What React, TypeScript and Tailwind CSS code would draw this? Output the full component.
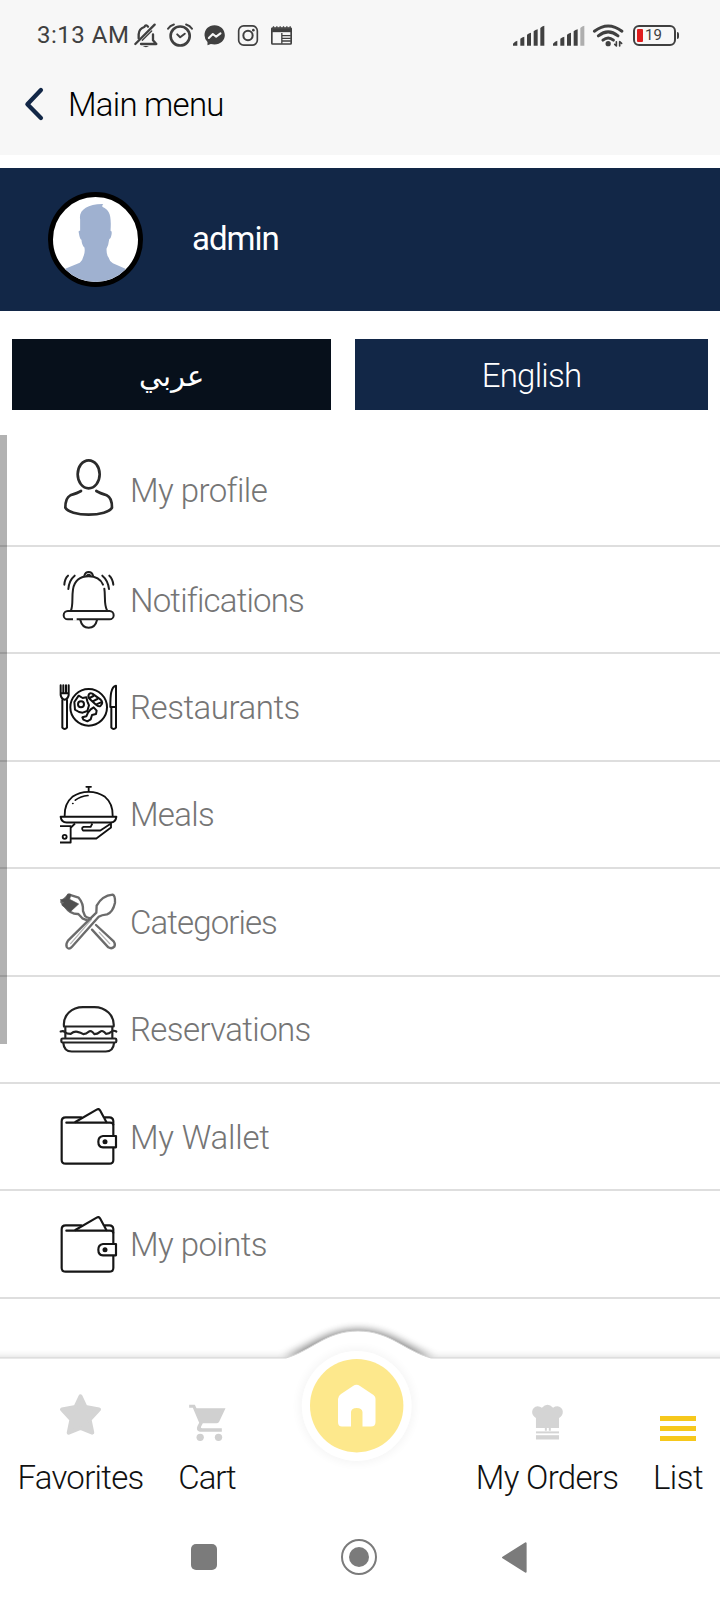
import type { ReactNode } from "react";

type IconProps = { box: string; className: string; children: ReactNode };

function Icon({ box, className, children }: IconProps) {
  return (
    <svg viewBox={box} className={`block shrink-0 overflow-visible ${className}`} fill="none" stroke="currentColor" strokeLinecap="round" strokeLinejoin="round">
      {children}
    </svg>
  );
}

function SignalIcon({ weak = false }: { weak?: boolean }) {
  return (
    <Icon box="455 73 96 63" className="h-[21px] w-8">
      <g fill="currentColor" stroke="none">
        <path d="M455 135v-6q6-8 13-9v15z" />
        <path d="M477 135v-21q5-5 12-6v27z" />
        <path d="M497 135v-33q5-5 12-6v39z" />
        <path d="M517 135v-43q5-5 12-6v49z" />
        <path d="M537 135v-53q5-6 12-7v60z" opacity={weak ? 0.4 : 1} />
      </g>
    </Icon>
  );
}

function StatusBar() {
  return (
    <div className="flex h-[70px] items-center pl-[37px] pr-[41px] text-[#404040]">
      <span className="w-[97px] whitespace-nowrap text-2xl font-normal tracking-[0.5px]">3:13 AM</span>
      <Icon box="403 67 72 75" className="h-[25px] w-6">
        <g strokeWidth="7">
          <path d="M407 130L465 72" />
          <path d="M417 113V101Q418 84 434 79Q439 70 445 78" />
          <path d="M424 130H470L460 119V101" />
          <path d="M428 119L456 91" strokeWidth="4" />
        </g>
        <path d="M429 136h19q-9 7-19 0z" fill="currentColor" stroke="none" />
      </Icon>
      <Icon box="501 67 79 72" className="ml-[9px] h-6 w-[26px]">
        <circle cx="541" cy="106" r="29" strokeWidth="8" />
        <path d="M504 84Q510 74 522 71M559 71Q571 74 577 84" strokeWidth="6" />
        <path d="M532 101l9 9 14-11" strokeWidth="6" />
      </Icon>
      <Icon box="613 73 62 63" className="ml-[11px] h-[21px] w-[21px]">
        <path d="M644 74C626 74 614 87 614 104Q614 116 623 124V134L633 130C657 136 675 122 675 104C675 87 662 74 644 74z" fill="currentColor" stroke="none" />
        <path d="M627 112L639 100L649 108L662 98" stroke="#f7f7f7" strokeWidth="6" />
      </Icon>
      <Icon box="714 73 60 62" className="ml-[13px] h-[21px] w-5">
        <rect x="716" y="75" width="56" height="58" rx="15" strokeWidth="5" />
        <circle cx="744" cy="104" r="14" strokeWidth="6" />
        <circle cx="760" cy="88" r="4" fill="currentColor" stroke="none" />
      </Icon>
      <Icon box="813 76 62 57" className="ml-[13px] h-[19px] w-[21px]">
        <rect x="815" y="82" width="58" height="48" rx="2" strokeWidth="5" />
        <path d="M816 83H873V94H816z" fill="currentColor" />
        <path d="M818 79H873" strokeWidth="4" strokeDasharray="4 6" strokeLinecap="butt" />
        <path d="M845 97V129M847 105H872M847 113H872M847 121H872" strokeWidth="4" strokeLinecap="butt" />
      </Icon>
      <div className="ml-auto flex items-center">
        <SignalIcon />
        <div className="w-2" />
        <SignalIcon weak />
        <Icon box="696 70 91 70" className="ml-[8px] h-[23px] w-[30px]">
          <path d="M700 92Q742 60 784 92M712 106Q742 82 772 106M726 119Q742 106 758 119" strokeWidth="9" />
          <circle cx="742" cy="130" r="8" fill="currentColor" stroke="none" />
          <path d="M767 124V137M777 137V124M762 132l5 5M777 124l6 5" strokeWidth="5" />
        </Icon>
        <div className="ml-[10px] flex items-center">
          <div className="flex h-[21px] w-[43px] items-center rounded-[6px] border-2 border-[#404040] pl-[2.5px]">
            <div className="h-[13px] w-[6px] rounded-[1px] bg-[#e01d1d]" />
            <span className="ml-[2px] text-[15px] leading-none">19</span>
          </div>
          <div className="ml-px h-[7px] w-[2.5px] rounded-r-sm bg-[#404040]" />
        </div>
      </div>
    </div>
  );
}

function ProfileIcon() {
  return (
    <Icon box="180 95 171 171" className="size-[57px] text-[#2b2b2b]">
      <g strokeWidth="8">
        <ellipse cx="266" cy="132" rx="33" ry="42" />
        <path d="M243 182Q233 188 211 195C199 201 196 213 196 232C202 244 232 253 266 253C300 253 330 244 336 232C336 213 333 201 320 195Q299 188 289 182" />
      </g>
    </Icon>
  );
}

function BellIcon() {
  return (
    <Icon box="180 423 171 171" className="size-[57px] text-[#1f1f1f]">
      <g strokeWidth="6">
        <rect x="191" y="543" width="150" height="25" rx="12.5" />
        <path d="M213 541C220 524 215 505 219 478C224 450 242 439 266 439C287 439 302 448 309 464M313 476C317 500 311 522 321 541" />
        <path d="M253 437Q256 426 266 426Q276 426 279 437M261 437Q266 431 271 437" />
        <path d="M241 570Q246 593 266 593Q286 593 291 570" />
        <path d="M193 464Q194 446 204 437M205 477Q207 451 224 437M340 464Q338 446 328 437M327 477Q324 451 307 437" />
      </g>
      <path d="M219 568H230" stroke="#fff" strokeWidth="8" strokeLinecap="butt" />
    </Icon>
  );
}

function PlateIcon() {
  return (
    <Icon box="180 86 171 171" className="size-[57px] text-[#111]">
      <g strokeWidth="6">
        <path d="M182 105V134Q184 146 194 148Q204 146 206 134V105M190 105V128M198 105V128M182 129H206" />
        <path d="M187 149V232Q194 240 201 232V149" />
        <path d="M334 170V232Q341 240 348 232V106C332 109 331 137 331 170H348" />
        <circle cx="266" cy="171" r="55" />
        <path d="M236 136L248 143L259 141L262 153L267 165L262 182L248 187L237 185L225 178L223 155z" />
        <circle cx="243" cy="162" r="9" />
        <path d="M266 134Q268 127 277 130L302 148Q311 157 302 166Q296 171 288 163L270 147Q263 141 266 134zM269 143L280 137M278 153L292 146M289 162L303 156" />
        <path d="M272 177L281 171L290 181L288 191L276 194L272 207L262 213L250 208L247 201L259 198L264 187z" />
      </g>
    </Icon>
  );
}

function ClocheIcon() {
  return (
    <Icon box="180 407.5 171 171" className="size-[57px] text-[#111]">
      <g strokeWidth="5.5">
        <path d="M194 497Q193 460 217 440Q238 425 266 425Q294 425 315 440Q339 460 338 497" />
        <path d="M182 500H349Q347 516 332 517H200Q184 516 182 500z" strokeWidth="6" />
        <path d="M259 410H273M266 411V423" />
        <path d="M226 450Q242 438 264 436M218 460h1" strokeWidth="5" />
        <path d="M180 528H212V577H180M212 533L225 520M213 565H289L333 532V520L301 541H249Q243 533 251 530H272L277 520" strokeLinecap="butt" />
        <circle cx="194" cy="560" r="6" />
      </g>
    </Icon>
  );
}

function CutleryIcon() {
  return (
    <Icon box="180 70 171 171" className="size-[57px] text-[#6b6b6b]">
      <g strokeWidth="7">
        <path d="M184 97L207 75L236 84Q251 101 249 124L255 139Q260 145 272 146M184 97L197 113Q211 134 235 133L247 146L262 152" />
        <path d="M276 180L325 233Q335 239 343 231Q347 223 341 215L288 166" />
        <path d="M290 108Q306 78 338 75Q346 78 345 99Q339 127 321 134Q305 136 296 141L216 231Q206 242 200 232Q197 223 204 213L289 129z" />
        <path d="M274 150L212 222M298 188L329 222" strokeWidth="4" opacity=".5" />
      </g>
      <path d="M181 91L191 99L185 106L211 126L236 103L209 89L213 74L203 73L197 87L182 90z" fill="#505050" stroke="#555" strokeWidth="2" />
    </Icon>
  );
}

function BurgerIcon() {
  return (
    <Icon box="180 392.5 171 171" className="size-[57px] text-[#222]">
      <g strokeWidth="6.5">
        <path d="M192 469C188 435 216 411 249 411H283C316 411 344 435 341 469z" />
        <path d="M196 472V502M337 472V502" />
        <path d="M182 484Q190 481 195 486T212 491Q222 483 232 485T250 492Q259 492 266 485T283 492Q292 492 300 485T318 491Q328 491 334 485T349 484" />
        <rect x="184" y="505" width="165" height="12" rx="4" />
        <path d="M190 519Q192 544 215 544H317Q340 544 342 519" />
      </g>
    </Icon>
  );
}

function WalletIcon() {
  return (
    <Icon box="180 84 171 171" className="size-[57px] text-[#161616]">
      <g strokeWidth="6.5">
        <path d="M340 165V139Q341 128 330 128H199M244 112H197Q185 112 185 124V240Q185 251 197 251H328Q340 251 340 240V204" />
        <path d="M226 126L290 89Q296 85 300 91L319 126M311 112H328Q339 112 340 123V134" />
        <path d="M348 168H309Q295 170 295 185Q295 201 309 202H348z" />
      </g>
      <circle cx="315" cy="185" r="7.5" fill="currentColor" stroke="none" />
    </Icon>
  );
}

const rows = [
  { label: "My profile", icon: <ProfileIcon />, size: "h-[112px]", track: "tracking-[-0.55px]" },
  { label: "Notifications", icon: <BellIcon />, size: "h-[107.4px]", track: "tracking-[-0.8px]" },
  { label: "Restaurants", icon: <PlateIcon />, size: "h-[107.4px]", track: "tracking-[-0.45px]" },
  { label: "Meals", icon: <ClocheIcon />, size: "h-[107.4px]", track: "tracking-[-0.7px]" },
  { label: "Categories", icon: <CutleryIcon />, size: "h-[107.4px]", track: "tracking-[-0.9px]" },
  { label: "Reservations", icon: <BurgerIcon />, size: "h-[107.4px]", track: "tracking-[-0.6px]" },
  { label: "My Wallet", icon: <WalletIcon />, size: "h-[107.4px]", track: "tracking-[-0.2px]" },
  { label: "My points", icon: <WalletIcon />, size: "h-[107.4px]", track: "tracking-[-0.55px]" },
];

function BottomNav() {
  return (
    <nav className="relative h-[147px] bg-white text-[33px] font-light leading-[40px] text-[#111]">
      <svg viewBox="0 0 720 240" className="absolute left-0 top-[-48px] block h-60 w-[720px]">
        <defs>
          <filter id="edge" x="-5%" y="-30%" width="110%" height="160%">
            <feGaussianBlur stdDeviation="4" />
          </filter>
          <filter id="ring" x="-20%" y="-20%" width="140%" height="140%">
            <feGaussianBlur stdDeviation="4" />
          </filter>
          <clipPath id="above">
            <rect width="720" height="62" />
          </clipPath>
        </defs>
        <g clipPath="url(#above)">
          <path d="M-20 48H285C306 42 326 20 358 20C390 20 408 40 432 48H740V70H-20z" fill="#000" opacity=".2" filter="url(#edge)" />
          <path d="M283 47C308 38 326 20 358 20C390 20 408 38 434 47z" fill="#000" opacity=".38" filter="url(#edge)" />
        </g>
        <path d="M-5 48H286C312 40.500 326 21 358 21C390 21 404 40.500 431 48H725V245H-5z" fill="#fff" stroke="#d4d4d4" strokeWidth="1" />
        <circle cx="356.700" cy="96" r="58" fill="#000" opacity=".035" filter="url(#ring)" />
        <circle cx="356.700" cy="96" r="55" fill="#fff" />
        <circle cx="356.700" cy="95.700" r="46.700" fill="#fde88c" />
        <path d="M338 89Q338 86 341 84L353 76Q356.500 73.500 360 76L372 84Q375.500 86 375.500 89V112Q375.500 116.500 371 116.500H362.500V102Q362 98 356.700 98Q351.500 98 351 102V116.500H342Q338 116.500 338 112z" fill="#fff" />
      </svg>
      <div className="relative flex h-full">
        <div className="flex w-[161px] flex-col items-center">
          <Icon box="182 311 122 122" className="mt-[36px] h-[41px] w-[41px] text-[#d4d4d4]">
            <path d="M243 318L258 350L298 357L270 387L278 426L243 412L208 426L216 387L188 357L228 350z" fill="currentColor" strokeWidth="12" />
          </Icon>
          <span className="mt-[23px] whitespace-nowrap tracking-[-0.7px]">Favorites</span>
        </div>
        <div className="flex w-[92px] flex-col items-center">
          <Icon box="566 341 110 111" className="mt-[46px] h-[37px] w-[37px] text-[#d0d0d0]">
            <path d="M566 343H583L588 354H675L656 394Q653 399 648 399H607L601 410Q600 414 606 414H664V424H598Q585 421 591 407L596 397L577 352H566z" fill="currentColor" stroke="none" />
            <circle cx="599" cy="441" r="11" fill="currentColor" stroke="none" />
            <circle cx="654" cy="441" r="11" fill="currentColor" stroke="none" />
          </Icon>
          <span className="mt-[17px] whitespace-nowrap tracking-[-1.1px]">Cart</span>
        </div>
        <div className="ml-auto mr-[14px] flex w-[150px] flex-col items-center">
          <Icon box="510 344 94 107" className="mt-[46px] h-[36px] w-[31px] text-[#d4d4d4]">
            <path d="M522 416V385C505 377 507 352 527 350Q535 351 540 354Q557 337 574 354Q579 350 588 350C608 353 608 378 592 385V416H567V424H561V416H555V424H549V416z" fill="currentColor" stroke="none" />
            <path d="M522 429H592" strokeWidth="6" strokeLinecap="butt" />
            <path d="M522 444H592" strokeWidth="13" strokeLinecap="butt" />
          </Icon>
          <span className="mt-[18px] whitespace-nowrap tracking-[-0.7px]">My Orders</span>
        </div>
        <div className="flex w-[84px] flex-col items-center">
          <div className="mt-[58px] flex h-[25px] w-[36px] flex-col justify-between">
            <div className="h-[5px] bg-[#f6c81c]" />
            <div className="h-[5px] bg-[#f6c81c]" />
            <div className="h-[5px] bg-[#f6c81c]" />
          </div>
          <span className="mt-[17px] whitespace-nowrap tracking-[-0.5px]">List</span>
        </div>
      </div>
    </nav>
  );
}

export default function App() {
  return (
    <div className="flex h-[1600px] w-[720px] flex-col overflow-hidden bg-white font-['Roboto','DejaVu_Sans',sans-serif]">
      <header className="h-[155px] shrink-0 bg-[#f7f7f7]">
        <StatusBar />
        <div className="flex h-[68px] items-center pl-[25px]">
          <Icon box="75 263 54 97" className="h-[32px] w-[18px] text-[#122747]">
            <path d="M123 269L82 312L123 354" strokeWidth="13" />
          </Icon>
          <h1 className="ml-[25px] pt-[2px] text-[33px] font-light tracking-[-0.75px] text-black">Main menu</h1>
        </div>
      </header>

      <section className="mt-[13px] flex h-[142.5px] shrink-0 items-center bg-[#122747] pl-12">
        <div className="size-[95px] overflow-hidden rounded-full border-[5px] border-black bg-white">
          <svg viewBox="159 138 257 257" className="block size-full">
            <path d="M241 205C236 178 263 158 311 159Q306 164 309 168C330 178 336 190 333 240Q339 240 335 256Q333 266 329 266Q327 284 321 294Q320 312 327 321Q329 331 340 338L378 355L390 420H185L196 355L240 337Q248 331 250 320Q257 306 254 291Q246 283 245 267Q240 266 237 246Q235 239 241 240z" fill="#9fb1d0" />
          </svg>
        </div>
        <span className="ml-[49px] pb-[2px] text-[33px] font-normal tracking-[-1px] text-white">admin</span>
      </section>

      <div className="mt-[28.5px] flex h-[71px] shrink-0 gap-6 px-3 text-[33px] font-light text-white">
        <button className="flex w-[319px] items-center justify-center bg-[#07101b] pt-[5px] text-[29px]" lang="ar" dir="rtl">عربي</button>
        <button className="flex flex-1 items-center justify-center bg-[#122747] pt-[2px] tracking-[-0.75px]">English</button>
      </div>

      <main className="relative mt-[25px] h-[923px] shrink-0">
        <ul>
          {rows.map((row) => (
            <li key={row.label} className={`flex items-center border-b-2 border-[#dedede] pl-[60px] ${row.size}`}>
              {row.icon}
              <span className={`ml-[13px] whitespace-nowrap pt-[2px] text-[33px] font-light leading-[40px] text-[#757575] ${row.track}`}>{row.label}</span>
            </li>
          ))}
        </ul>
        <div className="absolute left-0 top-0 h-[609px] w-[7px] bg-black/30" />
      </main>

      <BottomNav />

      <div className="relative flex h-[95px] items-start bg-white pl-[191px] pt-[34px]">
        <div className="mt-[5px] size-[26px] rounded-[5px] bg-[#7b7b7b]" />
        <div className="ml-[124px] flex size-[36px] items-center justify-center rounded-full border-[2.5px] border-[#7b7b7b]">
          <div className="size-[20px] rounded-full bg-[#7b7b7b]" />
        </div>
        <Icon box="427 754 74 92" className="ml-[125px] mt-[3px] h-[31px] w-[25px] text-[#7b7b7b]">
          <path d="M430 800L497 758V842z" fill="currentColor" strokeWidth="6" />
        </Icon>
      </div>
    </div>
  );
}
